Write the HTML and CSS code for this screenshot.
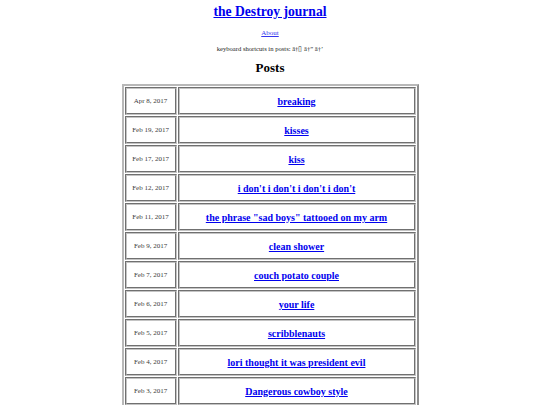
FILE: index.html
```html
<!DOCTYPE html>
<html>
<head>
<meta charset="utf-8">
<link rel="stylesheet" href="styles.css">
</head>
<body>
<h1 class="title"><a href="#">the Destroy journal</a></h1>
<p class="about"><a href="#">About</a></p>
<p class="keys">keyboard shortcuts in posts: â†&#x25af; â†” â†’</p>
<h2 class="posts">Posts</h2>
<table class="list">
<tr><td class="date">Apr 8, 2017</td><td class="post"><a href="#">breaking</a></td></tr>
<tr><td class="date">Feb 19, 2017</td><td class="post"><a href="#">kisses</a></td></tr>
<tr><td class="date">Feb 17, 2017</td><td class="post"><a href="#">kiss</a></td></tr>
<tr><td class="date">Feb 12, 2017</td><td class="post"><a href="#">i don't i don't i don't i don't</a></td></tr>
<tr><td class="date">Feb 11, 2017</td><td class="post"><a href="#">the phrase "sad boys" tattooed on my arm</a></td></tr>
<tr><td class="date">Feb 9, 2017</td><td class="post"><a href="#">clean shower</a></td></tr>
<tr><td class="date">Feb 7, 2017</td><td class="post"><a href="#">couch potato couple</a></td></tr>
<tr><td class="date">Feb 6, 2017</td><td class="post"><a href="#">your life</a></td></tr>
<tr><td class="date">Feb 5, 2017</td><td class="post"><a href="#">scribblenauts</a></td></tr>
<tr><td class="date">Feb 4, 2017</td><td class="post"><a href="#">lori thought it was president evil</a></td></tr>
<tr><td class="date">Feb 3, 2017</td><td class="post"><a href="#">Dangerous cowboy style</a></td></tr>
</table>
</body>
</html>
```
FILE: styles.css
```css
html, body {
  margin: 0;
  padding: 0;
  background: #fff;
}
body {
  font-family: "Liberation Serif", "Times New Roman", serif;
  color: #000;
  text-align: center;
  padding-top: 3px;
}
a {
  color: #0000ee;
}
.title {
  font-size: 13.6px;
  margin: 0;
  line-height: 17px;
}
.about {
  font-size: 7px;
  margin: 9px 0 0;
  line-height: 9px;
}
.about a {
  color: #3535ee;
}
.keys {
  font-size: 6.6px;
  margin: 6px 0 0;
  line-height: 9px;
  color: #222;
}
.posts {
  font-size: 13px;
  margin: 7px 0 0;
  line-height: 15px;
}
.list {
  margin: 9px auto 0;
  width: 297px;
  border: 2px solid;
  border-color: #b8b8b8 #8c8c8c #8c8c8c #b8b8b8;
  border-spacing: 1px;
  padding: 0;
}
.list td {
  border: 2px groove #c4c4c4;
  height: 24px;
  padding: 0;
}
.date {
  width: 48px;
  font-size: 7px;
  color: #3a3a3a;
}
.post {
  font-size: 10px;
  font-weight: bold;
}
```
